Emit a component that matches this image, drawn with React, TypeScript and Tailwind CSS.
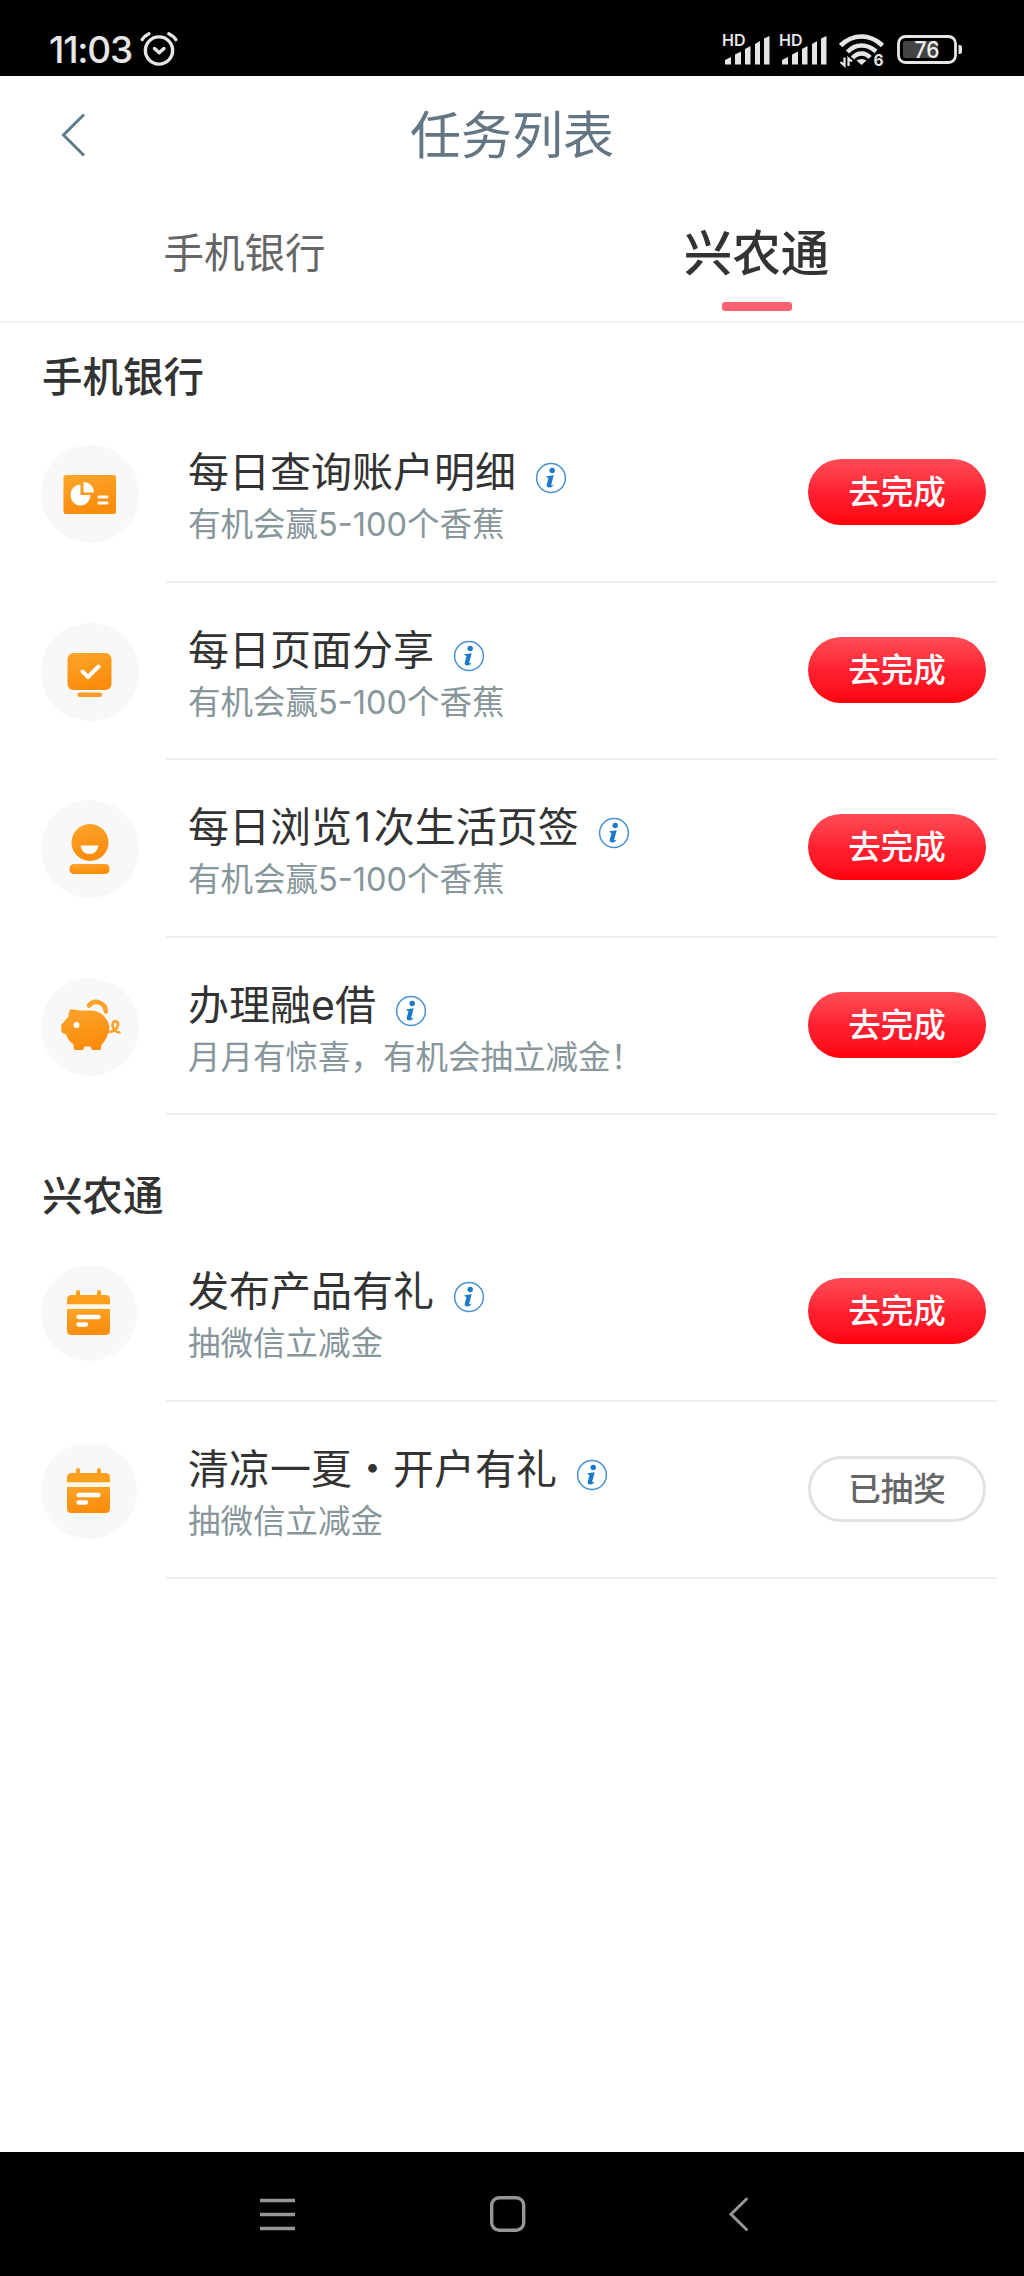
import type { ReactNode } from "react";
import { clsx } from "clsx";

// ── Types ─────────────────────────────────────────────────────
type IconName = "report" | "screen" | "smile" | "piggy" | "calendar";

interface Task {
  title: string;
  desc: string;
  icon: IconName;
  done?: boolean;
}

// ── Data ──────────────────────────────────────────────────────
const BANK_TASKS: Task[] = [
  { title: "每日查询账户明细",    desc: "有机会赢5-100个香蕉", icon: "report" },
  { title: "每日页面分享",        desc: "有机会赢5-100个香蕉", icon: "screen" },
  { title: "每日浏览1次生活页签", desc: "有机会赢5-100个香蕉", icon: "smile" },
  { title: "办理融e借",           desc: "月月有惊喜，有机会抽立减金！", icon: "piggy" },
];

const VILLAGE_TASKS: Task[] = [
  { title: "发布产品有礼",       desc: "抽微信立减金", icon: "calendar" },
  { title: "清凉一夏・开户有礼", desc: "抽微信立减金", icon: "calendar", done: true },
];

// ── Status bar ────────────────────────────────────────────────
function Signal() {
  return (
    <svg width="50" height="34" viewBox="0 0 50 34" fill="#e6e6e6">
      <text x="0" y="15" fontFamily="Inter, sans-serif" fontSize="16" fontWeight="600">HD</text>
      <path d="M3 33.500v-4.500l6-3v7.500zM13 33.500v-10l6-3v13zM23 33.500v-15.500l5.500-3v18.500zM33 33.500v-20.500l5-3v23.500zM42 33.500v-26l5.500-2.500v28.500z" />
    </svg>
  );
}

function StatusBar() {
  return (
    <div className="flex h-[76px] items-start bg-black pl-[49px] pr-[61px] text-[#e6e6e6]">
      <span className="mt-[28px] w-[90px] whitespace-nowrap font-['Inter',sans-serif] text-[37px] font-medium leading-[44px] tracking-[-1.2px]">
        11:03
      </span>
      <svg className="mt-[30px]" width="40" height="38" viewBox="0 0 40 38" fill="none" stroke="#e6e6e6" strokeWidth="3.4" strokeLinecap="round">
        <circle cx="20" cy="20.500" r="13.600" />
        <path d="M15.500 18.500l4.700 4.200 4.700-4.200" strokeLinejoin="round" />
        <path d="M3.200 9.500Q5.500 6 10 3.800M29.800 3.800Q34.500 6 36.800 9.500" />
      </svg>

      <div className="ml-auto mt-[31px] flex">
        <Signal />
        <span className="w-[7px]" />
        <Signal />
        <svg className="ml-[9px]" width="50" height="37" viewBox="0 0 50 37" fill="none" stroke="#e6e6e6" strokeWidth="4.600">
          <path d="M2.500 14.500Q12 5.500 23.500 5.500T44.500 14.500" />
          <path d="M9.500 21Q15.500 14.500 23.500 14.500T38 20.500" />
          <path d="M14.500 27Q18.500 22.500 23.500 22.500T32 26.500" />
          <path d="M23.500 34l-5-4.500q5-3 10 0z" fill="#e6e6e6" stroke="none" />
          <path d="M6.500 26.500v8l-4-3.500M10.500 35v-7.500l3.500 3" strokeWidth="2.300" />
          <text x="35.500" y="34.500" fontFamily="Inter, sans-serif" fontSize="15.500" fontWeight="700" fill="#e6e6e6" stroke="none">6</text>
        </svg>
        <svg className="ml-[7px]" width="68" height="34" viewBox="0 0 68 34">
          <rect x="3.500" y="5.500" width="57" height="26" rx="7" fill="none" stroke="#e6e6e6" strokeWidth="2.800" />
          <rect x="8" y="10" width="35" height="17" rx="2.500" fill="#444" />
          <path d="M63.500 14h1q2.500 0 2.500 2v5q0 2-2.500 2h-1z" fill="#e6e6e6" />
          <text x="19.500" y="27" fontFamily="Inter, sans-serif" fontSize="23" fontWeight="500" fill="#f0f0f0" textLength="25" lengthAdjust="spacingAndGlyphs">76</text>
        </svg>
      </div>
    </div>
  );
}

// ── Task icons, drawn on a 98px disc ──────────────────────────
const ICONS: Record<IconName, ReactNode> = {
  report: (
    <>
      <rect x="22.500" y="30" width="52.500" height="39" rx="2.500" fill="url(#amber)" />
      <path d="M39.500 39.500v10.500h10a10 10.500 0 1 1-10-10.500z" fill="#fff" />
      <path d="M42.500 37a10.500 10.500 0 0 1 10.500 10.500h-10.500z" fill="#fff" />
      <path d="M58 52h8M58 58h8" stroke="#fff" strokeWidth="3" strokeLinecap="round" />
    </>
  ),
  screen: (
    <>
      <rect x="26.500" y="30" width="44" height="37" rx="6" fill="url(#amber)" />
      <path d="M41.500 48.500l5.500 5.500 10.500-10.500" fill="none" stroke="#fff" strokeWidth="4" strokeLinecap="round" strokeLinejoin="round" />
      <rect x="36.500" y="69.500" width="24.500" height="4.500" rx="2" fill="#f99a2c" />
    </>
  ),
  smile: (
    <>
      <circle cx="49" cy="42.500" r="18.500" fill="url(#amber)" />
      <path d="M39.500 45.500h18q-1.500 8.500-9 8.500t-9-8.500z" fill="#fff" />
      <rect x="28.500" y="64" width="40" height="10" rx="4.500" fill="url(#amber)" />
    </>
  ),
  piggy: (
    <>
      <path
        d="M28.500 32.500q0-1.500 2-1.300l9 1.300h10.500q8 .5 12.500 5t6 11q-.5 10-8 18.500l-1 5h-8.500l-1.500-3.500h-6l-1.500 3.500h-8.500l-1.500-6q-5-3.500-7-9.500l-3.500-1.500q-1.200-.8-1.200-2.500v-5q0-2 1.700-2.500l5-6z"
        fill="url(#amber)"
      />
      <circle cx="35.500" cy="47" r="3" fill="#fff" />
      <path d="M48 27.500a9.500 9.800 0 0 1 16.800 6" fill="none" stroke="#fba028" strokeWidth="4.500" strokeLinecap="round" />
      <path d="M68.500 54q7.500-1.500 8.500-7 .3-3.700-2.500-3.700t-3 3.700q.5 6.500 7 7.500" fill="none" stroke="#fba028" strokeWidth="2.700" strokeLinecap="round" />
    </>
  ),
  calendar: (
    <g transform="translate(-1 0)">
      <path d="M32 31h4v-3a1.500 1.500 0 0 1 4 0v3h17v-3a1.500 1.500 0 0 1 4 0v3h4.500q4.500 0 4.500 4.500v5h-43v-5q0-4.500 5-4.500z" fill="#ff9f1e" />
      <path d="M27 40.500h43v4.500h-43z" fill="#fff6e6" />
      <path d="M27 45h43v21.500q0 4.500-4.500 4.500h-34q-4.500 0-4.500-4.500z" fill="url(#amber)" />
      <path d="M38.500 53h20M38.500 60.500h7.500" stroke="#fff" strokeWidth="4.300" strokeLinecap="round" />
    </g>
  ),
};

function TaskIcon({ name }: { name: IconName }) {
  return (
    <svg className="mt-[40px] shrink-0" width="98" height="98" viewBox="0 0 98 98">
      <defs>
        <linearGradient id="amber" x1="0" y1="0" x2="0.300" y2="1">
          <stop offset="0" stopColor="#fca62c" />
          <stop offset="1" stopColor="#fb8c0c" />
        </linearGradient>
      </defs>
      <circle cx={name === "calendar" ? 48 : 49} cy="49" r={name === "calendar" ? 48 : 49} fill="#f8f8f8" />
      {ICONS[name]}
    </svg>
  );
}

function InfoIcon() {
  return (
    <svg className="mt-[15px] shrink-0" width="32" height="32" viewBox="0 0 32 32">
      <circle cx="16" cy="16" r="14.400" fill="none" stroke="#4a92d2" strokeWidth="1.500" />
      <circle cx="17.200" cy="8.500" r="2.700" fill="#1b79c9" />
      <path d="M11.500 14.200l7.200-.9-2.500 9.400q-.3 1.300 2.600-.1-1.500 2.900-4.400 2.900-3.300 0-2.600-2.900l1.700-6.700-2-.6z" fill="#1b79c9" />
    </svg>
  );
}

// ── Task row ──────────────────────────────────────────────────
function TaskRow({ task }: { task: Task }) {
  return (
    <li className="flex h-[177.500px] pl-[41px]">
      <TaskIcon name={task.icon} />
      <div className="ml-[27px] mr-[27px] flex flex-1 border-b-2 border-[#eeeeee] pl-[22px] pr-[11px]">
        <div className="flex-1 pt-[42px]">
          <div className="flex h-[48px]">
            <h3 className="whitespace-nowrap text-[41px] leading-[50px] text-[#333]">
              {/* digits get a little air between the hanzi */}
              {task.title.split(/(\d+)/).map((part, i) =>
                i % 2 ? <span key={i} className="px-[2.500px]">{part}</span> : part,
              )}
            </h3>
            <span className="w-[19px] shrink-0" />
            <InfoIcon />
          </div>
          <p className="mt-[10px] whitespace-nowrap text-[32.500px] leading-[40px] text-[#87969b]">{task.desc}</p>
        </div>
        <button
          className={clsx(
            "mt-[54px] flex h-[66px] w-[178px] shrink-0 items-center justify-center rounded-full pt-[3px] text-[32.500px] font-medium leading-none",
            task.done
              ? "border-[3px] border-[#e2e2e2] bg-white text-[#666]"
              : "bg-linear-to-b from-[#ff4b55] via-[#ff2031] to-[#ff0008] text-white",
          )}
        >
          {task.done ? "已抽奖" : "去完成"}
        </button>
      </div>
    </li>
  );
}

function Section({ title, tasks }: { title: string; tasks: Task[] }) {
  return (
    <section>
      <h2 className="pl-[42px] text-[40.500px] font-medium leading-[54px] text-[#333]">{title}</h2>
      <ul>
        {tasks.map((task) => (
          <TaskRow key={task.title} task={task} />
        ))}
      </ul>
    </section>
  );
}

// ── Page ──────────────────────────────────────────────────────
export default function App() {
  return (
    <div className="flex h-[2276px] w-[1024px] flex-col overflow-hidden bg-white font-['Inter','Noto_Sans_CJK_SC',sans-serif]">
      <StatusBar />

      {/* Title bar */}
      <header className="grid h-[118px] grid-cols-[88px_1fr_88px] items-center">
        <svg className="ml-[60px]" width="28" height="44" viewBox="0 0 28 44" fill="none" stroke="#5f7c8d" strokeWidth="3">
          <path d="M24 1.500L3.500 22 24 42.500" />
        </svg>
        <h1 className="text-center text-[51px] leading-none text-[#647684]">任务列表</h1>
      </header>

      {/* Tabs */}
      <nav className="grid h-[129px] grid-cols-2 border-b-2 border-[#f1f1f1]">
        <div className="flex justify-center pt-[36px] pr-[23px]">
          <span className="text-[40.500px] leading-[48px] text-[#666]">手机银行</span>
        </div>
        <div className="flex flex-col items-center pr-[23px] pt-[32px]">
          <span className="text-[48.500px] font-medium leading-[56px] text-[#333]">兴农通</span>
          <span className="mt-[20px] h-[9px] w-[70px] rounded-[3px] bg-[#fb646e]" />
        </div>
      </nav>

      <main className="flex flex-1 flex-col gap-[55px] pt-[28px]">
        <Section title="手机银行" tasks={BANK_TASKS} />
        <Section title="兴农通" tasks={VILLAGE_TASKS} />
      </main>

      {/* System navigation */}
      <footer className="flex h-[124px] items-start bg-black pl-[260px] pt-[43px]">
        <svg width="36" height="38" viewBox="0 0 36 38" stroke="#969696" strokeWidth="3.500">
          <path d="M0 5.500h35M0 19.500h35M0 33.500h35" />
        </svg>
        <svg className="ml-[193px]" width="38" height="38" viewBox="0 0 38 38" fill="none" stroke="#969696" strokeWidth="3.400">
          <rect x="2.700" y="2.700" width="32" height="32.500" rx="7.500" />
        </svg>
        <svg className="ml-[201px]" width="22" height="38" viewBox="0 0 22 38" fill="none" stroke="#969696" strokeWidth="3" strokeLinecap="round">
          <path d="M18.500 4L3 19.300 18.500 34.500" />
        </svg>
      </footer>
    </div>
  );
}
